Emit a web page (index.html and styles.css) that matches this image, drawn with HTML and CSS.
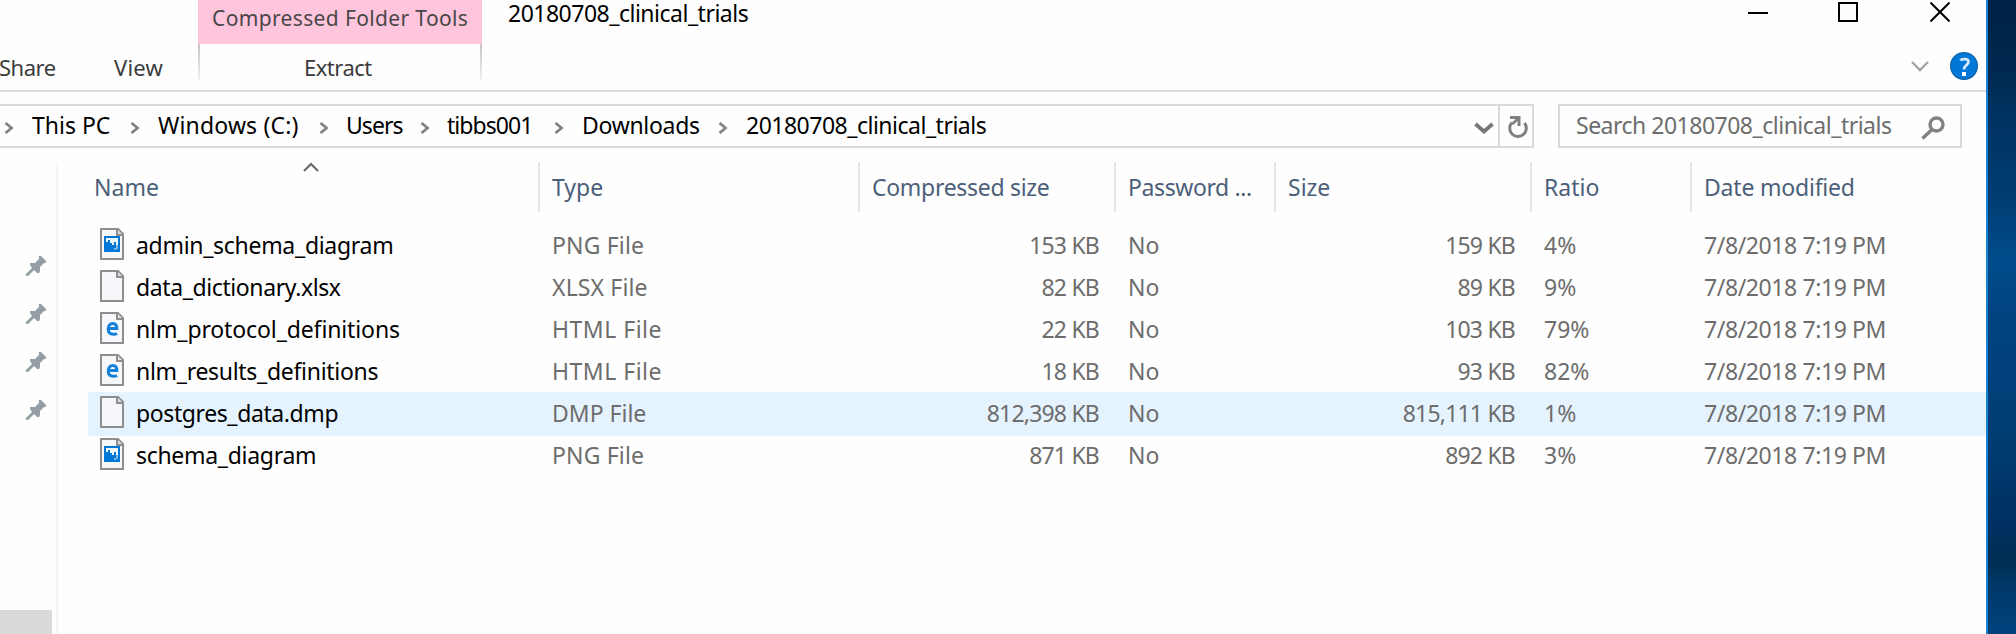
FILE: index.html
```
<!DOCTYPE html>
<html lang="en">
<head>
<meta charset="utf-8">
<title>20180708_clinical_trials</title>
<link rel="stylesheet" href="styles.css">
</head>
<body>
<svg class="defs" aria-hidden="true">
  <symbol id="sheet" viewBox="0 0 24 32">
    <path d="M1 1H18L23 6V31H1Z" fill="#f5f7fb" stroke="#8e8e8e" stroke-width="2"/>
    <path d="M17 1V7H23" fill="#e0e0e0" stroke="#8e8e8e" stroke-width="2"/>
  </symbol>
  <symbol id="png" viewBox="0 0 24 32">
    <use href="#sheet"/>
    <path d="M4 8H20V24H4Z" fill="#0078d7"/>
    <path d="M6 10H18V17H16V14H14V17H12V15H10V12H8V14H6Z" fill="#eef6fd"/>
    <path d="M16 17H18V21H16V22H14V20H16Z" fill="#7ab8ea"/>
  </symbol>
  <symbol id="html" viewBox="0 0 24 32">
    <use href="#sheet"/>
    <path d="M8.500 16.500H16.800C16.800 13 15.500 11.500 13 11.500C9.800 11.500 8.200 14 8.200 17C8.200 20.500 10.500 22.300 13.500 22.300C15 22.300 16.200 22 17 21.500" fill="none" stroke="#1381dc" stroke-width="3"/>
  </symbol>
  <symbol id="pin" viewBox="0 0 20 20">
    <path d="M13 0H15L20 5V7H18L14 11V15L13 17H11L8 14L2 20H0V18L6 12L4 9V7H9L13 3Z" fill="#939da4"/>
  </symbol>
  <symbol id="chev" viewBox="0 0 10 12">
    <path d="M1.500 1L7.500 6L1.500 11" fill="none" stroke="#838383" stroke-width="2.800"/>
  </symbol>
</svg>
<div class="desktop">
<div class="window">
  <header class="top">
    <nav class="tabs">
      <span class="tab share">Share</span>
      <span class="tab view">View</span>
    </nav>
    <div class="context">
      <div class="context-title">Compressed Folder Tools</div>
      <div class="context-tab"><span>Extract</span></div>
    </div>
    <div class="title">20180708_clinical_trials</div>
    <div class="controls">
      <div class="caption">
        <svg width="20" height="20"><path d="M0 11H20" stroke="#000" stroke-width="2"/></svg>
        <svg width="20" height="20"><path d="M1 1H19V19H1Z" fill="none" stroke="#000" stroke-width="2"/></svg>
        <svg width="20" height="20"><path d="M.5 .5L19.500 19.500M19.500 .5L.5 19.500" stroke="#000" stroke-width="2"/></svg>
      </div>
      <div class="help-row">
        <svg width="18" height="12"><path d="M1 2L9 10L17 2" fill="none" stroke="#a3a3a3" stroke-width="2.400"/></svg>
        <svg width="28" height="28"><circle cx="14" cy="14" r="13.300" fill="#0078d7" stroke="#0f64ab" stroke-width="1.400"/><path d="M10.500 8.500C11.500 6.800 18.500 6.300 18.500 9.800C18.500 13 14 13.300 14 17.500" fill="none" stroke="#d5e9fa" stroke-width="2.800"/><path d="M12 20H16V24H12Z" fill="#fff"/></svg>
      </div>
    </div>
  </header>
  <div class="navbar">
    <div class="address">
      <div class="crumb c1"><svg><use href="#chev"/></svg><span>This PC</span></div>
      <div class="crumb c2"><svg><use href="#chev"/></svg><span class="wide">Windows (C:)</span></div>
      <div class="crumb c3"><svg><use href="#chev"/></svg><span class="k9">Users</span></div>
      <div class="crumb c4"><svg><use href="#chev"/></svg><span class="k9">tibbs001</span></div>
      <div class="crumb c5"><svg><use href="#chev"/></svg><span class="k3">Downloads</span></div>
      <div class="crumb c6"><svg><use href="#chev"/></svg><span class="k5">20180708_clinical_trials</span></div>
      <div class="drop"><svg width="20" height="13"><path d="M1.500 2L10 9.500L18.500 2" fill="none" stroke="#777" stroke-width="3.800"/></svg></div>
      <div class="refresh"><svg width="20" height="22"><path d="M4 6.500A8.300 8.300 0 1 0 16.500 7" fill="none" stroke="#808080" stroke-width="3"/><path d="M2 1.500H11V10" fill="none" stroke="#808080" stroke-width="3"/><path d="M10.500 2L4.500 8" stroke="#808080" stroke-width="2.600"/></svg></div>
    </div>
    <div class="search"><span class="k5">Search 20180708_clinical_trials</span>
      <svg width="24" height="24"><circle cx="15.500" cy="8.500" r="6.500" fill="none" stroke="#828282" stroke-width="3.400"/><path d="M11 13.500L1.500 22.500" stroke="#828282" stroke-width="3.400"/></svg></div>
  </div>
  <div class="body">
    <aside class="side">
      <div class="pins"><svg><use href="#pin"/></svg><svg><use href="#pin"/></svg><svg><use href="#pin"/></svg><svg><use href="#pin"/></svg></div>
      <div class="side-item"></div>
    </aside>
    <main class="files">
      <div class="cols head">
        <div class="name-head">Name<svg class="sort" width="16" height="10"><path d="M1 9L8 2L15 9" fill="none" stroke="#666" stroke-width="2"/></svg></div>
        <div>Type</div><div class="k3">Compressed size</div><div class="k4">Password ...</div><div>Size</div><div>Ratio</div><div class="k2">Date modified</div>
      </div>
      <div class="cols row"><div class="name k3"><svg><use href="#png"/></svg><span>admin_schema_diagram</span></div><div class="wide">PNG File</div><div class="num">153 KB</div><div>No</div><div class="num">159 KB</div><div>4%</div><div class="k4">7/8/2018 7:19 PM</div></div>
      <div class="cols row"><div class="name k4"><svg><use href="#sheet"/></svg><span>data_dictionary.xlsx</span></div><div class="wide">XLSX File</div><div class="num">82 KB</div><div>No</div><div class="num">89 KB</div><div>9%</div><div class="k4">7/8/2018 7:19 PM</div></div>
      <div class="cols row"><div class="name k1"><svg><use href="#html"/></svg><span>nlm_protocol_definitions</span></div><div class="wider">HTML File</div><div class="num">22 KB</div><div>No</div><div class="num">103 KB</div><div>79%</div><div class="k4">7/8/2018 7:19 PM</div></div>
      <div class="cols row"><div class="name k3"><svg><use href="#html"/></svg><span>nlm_results_definitions</span></div><div class="wider">HTML File</div><div class="num">18 KB</div><div>No</div><div class="num">93 KB</div><div>82%</div><div class="k4">7/8/2018 7:19 PM</div></div>
      <div class="cols row hover"><div class="name k4"><svg><use href="#sheet"/></svg><span>postgres_data.dmp</span></div><div>DMP File</div><div class="num">812,398 KB</div><div>No</div><div class="num">815,111 KB</div><div>1%</div><div class="k4">7/8/2018 7:19 PM</div></div>
      <div class="cols row"><div class="name k3"><svg><use href="#png"/></svg><span>schema_diagram</span></div><div class="wide">PNG File</div><div class="num">871 KB</div><div>No</div><div class="num">892 KB</div><div>3%</div><div class="k4">7/8/2018 7:19 PM</div></div>
    </main>
  </div>
</div>
</div>
</body>
</html>
```
FILE: styles.css
```
* { box-sizing: border-box; }
body { margin: 0; font: 23px/30px "Noto Sans", "Open Sans", sans-serif; color: #000; overflow: hidden; }
svg { display: block; flex: none; }
.defs { position: absolute; width: 0; height: 0; }

.desktop {
  width: 2016px; height: 634px; display: flex;
  background: linear-gradient(180deg, #002246 0, #00284f 70px, #003260 110px, #003e74 205px, #004c8b 260px, #00437f 315px, #00407b 370px, #003c71 445px, #003061 526px, #002d54 560px, #003969 586px, #00427d 634px);
}
.window { width: 1988px; height: 634px; background: #fefefe; border-right: 2px solid #1883d7; display: flex; flex-direction: column; overflow: hidden; }

.top { height: 92px; border-bottom: 2px solid #dadada; display: flex; flex: none; }
.tabs { width: 198px; padding-top: 44px; display: flex; height: 90px; align-items: center; font-size: 22px; color: #3b3b3b; flex: none; }
.share { margin-left: -1px; width: 115px; letter-spacing: -.5px; }
.view { letter-spacing: .2px; }
.context { width: 284px; flex: none; font-size: 22px; }
.context-title { height: 44px; background: #ffc5dd; padding: 3px 0 0 14px; font-size: 21px; letter-spacing: .36px; color: #484848; white-space: nowrap; }
.context-tab {
  height: 46px; display: flex; align-items: center; padding-left: 106px; color: #3b3b3b; letter-spacing: -.5px;
  background: linear-gradient(#c4c4c4, #efefef) left top / 2px 36px no-repeat, linear-gradient(#c4c4c4, #efefef) right top / 2px 36px no-repeat;
}
.title { padding-left: 26px; line-height: 26px; letter-spacing: -.5px; flex: 1; }
.controls { width: 238px; flex: none; }
.caption { height: 52px; display: flex; padding-top: 2px; }
.caption svg + svg { margin-left: 70px; }
.caption svg:last-child { margin-left: 72px; }
.help-row { display: flex; align-items: center; padding-left: 163px; gap: 21px; }

.navbar { display: flex; height: 56px; padding-top: 12px; flex: none; }
.address { width: 1534px; height: 44px; border: solid #d9d9d9; border-width: 2px 2px 2px 0; display: flex; align-items: center; padding-left: 4px; }
.crumb { display: flex; align-items: center; gap: 18px; padding-bottom: 2px; white-space: nowrap; flex: none; }
.crumb svg { width: 10px; height: 12px; margin-top: 5px; }
.c1 { width: 126px; }
.c2 { width: 189px; }
.c3, .c4 { gap: 17px; }
.c3 { width: 101px; }
.c4 { width: 134px; }
.c5 { width: 164px; }
.c6 { flex: 1; }
.drop { width: 24px; padding-top: 4px; }
.refresh { height: 40px; width: 34px; border-left: 2px solid #d9d9d9; padding: 10px 0 0 8px; }
.search { margin-left: 24px; width: 404px; height: 44px; border: 2px solid #d9d9d9; display: flex; justify-content: space-between; align-items: center; padding: 0 15px 2px 16px; color: #6d6d6d; white-space: nowrap; }
.search svg { margin-top: 5px; }

.body { display: flex; flex: 1; padding-top: 14px; }
.side { width: 58px; border-right: 2px solid #f5f5f5; display: flex; flex-direction: column; justify-content: space-between; flex: none; }
.pins { display: flex; flex-direction: column; gap: 28px; padding: 94px 0 0 26px; }
.pins svg { width: 20px; height: 20px; }
.side-item { width: 52px; height: 24px; background: #d9d9d9; }

.files { flex: 1; padding-left: 30px; }
.cols { display: grid; grid-template-columns: 450px 320px 256px 160px 256px 160px 1fr; align-items: center; white-space: nowrap; }
.cols > div { padding-left: 14px; }
.head { height: 50px; margin-bottom: 13px; color: #4c607a; }
.head > div { height: 50px; line-height: 50px; border-left: 2px solid #e5e5e5; padding-left: 12px; }
.head > .name-head { border: 0; padding-left: 6px; position: relative; }
.sort { position: absolute; left: 215px; top: 0; }
.row { height: 42px; padding-bottom: 2px; color: #6d6d6d; }
.row.hover { background: #e5f3ff; box-shadow: 0 1px #e5f3ff, 0 -1px #e5f3ff; }
.row > .name { display: flex; align-items: center; gap: 12px; padding-left: 12px; color: #000; }
.name svg { width: 24px; height: 32px; margin-bottom: 2px; }
.row > .num { text-align: right; padding-right: 15px; letter-spacing: -.8px; }

.k1 { letter-spacing: -.12px; }
.k2 { letter-spacing: -.2px; }
.k3 { letter-spacing: -.3px; }
.k4 { letter-spacing: -.4px; }
.k5 { letter-spacing: -.5px; }
.k9 { letter-spacing: -.95px; }
.wide { letter-spacing: .15px; }
.wider { letter-spacing: .5px; }
```
